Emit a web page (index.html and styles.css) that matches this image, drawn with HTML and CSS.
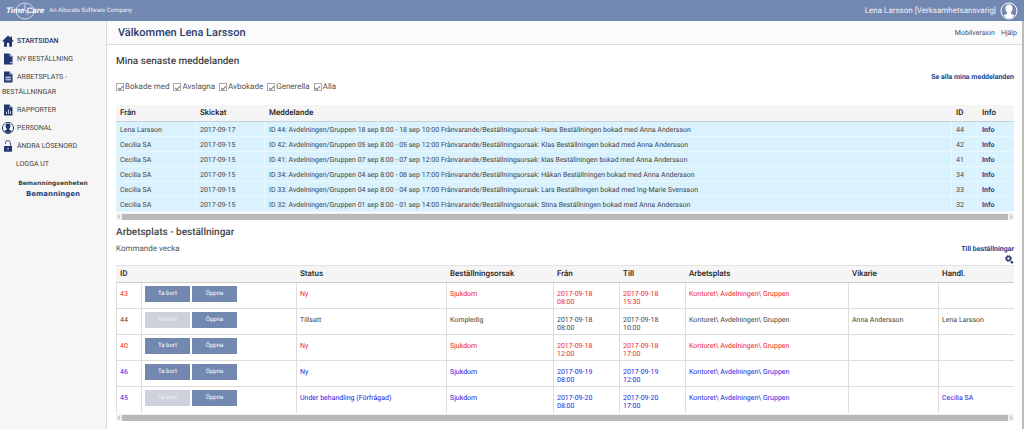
FILE: index.html
```html
<!DOCTYPE html>
<html lang="sv">
<head>
<meta charset="utf-8">
<title>Time Care</title>
<link rel="stylesheet" href="styles.css">
</head>
<body>
<header class="topbar">
  <div class="logo">
    <svg class="logo-ring" viewBox="0 0 28 18" aria-hidden="true"><ellipse cx="14" cy="9" rx="9" ry="8" fill="none" stroke="#d5dcec" stroke-width="1"/><path d="M14 2v6l3 5" fill="none" stroke="#d5dcec"/></svg>
    <span>Time</span><span>Care</span>
  </div>
  <span class="tagline">An Allocate Software Company</span>
  <span class="user">Lena Larsson [Verksamhetsansvarig]</span>
  <svg class="avatar" viewBox="0 0 18 18" aria-hidden="true"><circle cx="9" cy="9" r="8" fill="#7388b0" stroke="#fff" stroke-width="1"/><path d="M9 2.500c-2.600 0-3.800 1.700-3.600 4 .1 1.800.8 3 1.700 3.900v1.400c-1 .5-2.400.9-3.600 1.700A7 7 0 0 0 9 16.300a7 7 0 0 0 5.500-2.800c-1.200-.8-2.600-1.200-3.600-1.700v-1.400c.9-.9 1.600-2.100 1.700-3.900.2-2.300-1-4-3.600-4z" fill="#fff"/></svg>
</header>
<div class="shell">
  <nav class="sidebar">
    <a class="item active" href="#"><svg viewBox="0 0 12 12"><path d="M6 .5L.3 6l.8.9L2 6v5.700h3V8h2.200v3.700H10V6l.9.900.8-.9L10 4.200V1.500H8.300v1.200z"/></svg>STARTSIDAN</a>
    <a class="item" href="#"><svg viewBox="0 0 12 12"><path d="M2 .5h5.500L10.500 3.500v8H2z"/><path d="M7.500.5v3h3" fill="#aab4cc"/><circle cx="9" cy="9.500" r=".8" fill="#fff"/></svg>NY BESTÄLLNING</a>
    <a class="item" href="#"><svg viewBox="0 0 12 12"><path d="M2 .5h5.500L10.500 3.500v8H2z"/><path d="M7.500.5v3h3" fill="#aab4cc"/><path d="M3.500 5.500h5.500v4H3.500z" fill="#aab9dd"/><path d="M3.500 7.500h5.500" stroke="#24386f" stroke-width=".6"/></svg>ARBETSPLATS -<br>BESTÄLLNINGAR</a>
    <a class="item" href="#"><svg viewBox="0 0 12 12"><path d="M2 .5h5.500L10.500 3.500v8H2z"/><path d="M7.500.5v3h3" fill="#aab4cc"/><path d="M4.500 10V7.500M6.500 10V5.500M8.500 10V7" stroke="#c5cde0"/></svg>RAPPORTER</a>
    <a class="item" href="#"><svg viewBox="0 0 12 12"><circle cx="6" cy="6" r="5.500" fill="#fff" stroke="#24386f"/><path d="M6 1.500c-1.800 0-2.600 1.200-2.500 2.700.1 1.200.6 2 1.200 2.600v.9L2.200 9A5 5 0 0 0 6 11a5 5 0 0 0 3.800-2L7.300 7.700v-.9c.6-.6 1.100-1.400 1.200-2.600.1-1.500-.7-2.700-2.500-2.700z"/></svg>PERSONAL</a>
    <a class="item" href="#"><svg viewBox="0 0 12 12"><rect x="2" y="6" width="8" height="5.700"/><path d="M3.500 3.800V3a2.400 2.400 0 0 1 4.900 0v3" fill="none" stroke="#4b5b87"/><circle cx="6" cy="8.700" r=".9" fill="#aab4cc"/></svg>ÄNDRA LÖSENORD</a>
    <a class="item logout" href="#">LOGGA UT</a>
    <div class="unit"><span>Bemanningsenheten</span><strong>Bemanningen</strong></div>
  </nav>
  <main class="main">
    <div class="titlebar">
      <h1>Välkommen Lena Larsson</h1>
      <div class="tools"><a href="#">Mobilversion</a><a href="#">Hjälp</a></div>
    </div>
    <div class="content">
      <section>
        <h2>Mina senaste meddelanden</h2>
        <div class="filterrow">
          <div class="filters">
            <label><input type="checkbox" checked>Bokade med</label>
            <label><input type="checkbox" checked>Avslagna</label>
            <label><input type="checkbox" checked>Avbokade</label>
            <label><input type="checkbox" checked>Generella</label>
            <label><input type="checkbox" checked>Alla</label>
          </div>
          <a class="link" href="#">Se alla mina meddelanden</a>
        </div>
        <table class="messages">
          <colgroup><col class="w-from"><col class="w-sent"><col><col class="w-no"><col class="w-info"></colgroup>
          <thead><tr><th>Från</th><th>Skickat</th><th>Meddelande</th><th>ID</th><th>Info</th></tr></thead>
          <tbody>
            <tr><td>Lena Larsson</td><td>2017-09-17</td><td>ID 44: Avdelningen/Gruppen 18 sep 8:00 - 18 sep 10:00 Frånvarande/Beställningsorsak: Hans Beställningen bokad med Anna Andersson</td><td>44</td><td><a class="link" href="#">Info</a></td></tr>
            <tr><td>Cecilia SA</td><td>2017-09-15</td><td>ID 42: Avdelningen/Gruppen 05 sep 8:00 - 05 sep 12:00 Frånvarande/Beställningsorsak: Klas Beställningen bokad med Anna Andersson</td><td>42</td><td><a class="link" href="#">Info</a></td></tr>
            <tr><td>Cecilia SA</td><td>2017-09-15</td><td>ID 41: Avdelningen/Gruppen 07 sep 8:00 - 07 sep 12:00 Frånvarande/Beställningsorsak: klas Beställningen bokad med Anna Andersson</td><td>41</td><td><a class="link" href="#">Info</a></td></tr>
            <tr><td>Cecilia SA</td><td>2017-09-15</td><td>ID 34: Avdelningen/Gruppen 04 sep 8:00 - 08 sep 17:00 Frånvarande/Beställningsorsak: Håkan Beställningen bokad med Anna Andersson</td><td>34</td><td><a class="link" href="#">Info</a></td></tr>
            <tr><td>Cecilia SA</td><td>2017-09-15</td><td>ID 33: Avdelningen/Gruppen 04 sep 8:00 - 04 sep 17:00 Frånvarande/Beställningsorsak: Lars Beställningen bokad med Ing-Marie Svensson</td><td>33</td><td><a class="link" href="#">Info</a></td></tr>
            <tr><td>Cecilia SA</td><td>2017-09-15</td><td>ID 32: Avdelningen/Gruppen 01 sep 8:00 - 01 sep 14:00 Frånvarande/Beställningsorsak: Stina Beställningen bokad med Anna Andersson</td><td>32</td><td><a class="link" href="#">Info</a></td></tr>
          </tbody>
        </table>
        <div class="scroll"><span>‹</span><i></i><span>›</span></div>
      </section>
      <section class="orders-section">
        <h2>Arbetsplats - beställningar</h2>
        <div class="weekrow"><span>Kommande vecka</span><a class="link" href="#">Till beställningar</a></div>
        <div class="gearrow"><button type="button" aria-label="Inställningar"><svg viewBox="0 0 9 9"><circle cx="3.500" cy="3.500" r="2" fill="none" stroke="#2c3f72" stroke-width="1.600"/><circle cx="3.500" cy="3.500" r="3" fill="none" stroke="#2c3f72" stroke-dasharray="1.200 1.150"/><circle cx="7" cy="7.200" r="1.300" fill="#2c3f72"/></svg></button></div>
        <table class="orders">
          <colgroup><col class="c-id"><col class="c-act"><col class="c-status"><col class="c-reason"><col class="c-date"><col class="c-date"><col class="c-place"><col class="c-sub"><col class="c-handler"></colgroup>
          <thead><tr><th>ID</th><th></th><th>Status</th><th>Beställningsorsak</th><th>Från</th><th>Till</th><th>Arbetsplats</th><th>Vikarie</th><th>Handl.</th></tr></thead>
          <tbody>
            <tr class="red"><td>43</td><td><div class="actions"><button type="button">Ta bort</button><button type="button">Öppna</button></div></td><td>Ny</td><td>Sjukdom</td><td>2017-09-18<br>08:00</td><td>2017-09-18<br>15:30</td><td>Kontoret\ Avdelningen\ Gruppen</td><td></td><td></td></tr>
            <tr><td>44</td><td><div class="actions"><button type="button" disabled>Ta bort</button><button type="button">Öppna</button></div></td><td>Tillsatt</td><td>Kompledig</td><td>2017-09-18<br>08:00</td><td>2017-09-18<br>10:00</td><td>Kontoret\ Avdelningen\ Gruppen</td><td>Anna Andersson</td><td>Lena Larsson</td></tr>
            <tr class="red"><td>40</td><td><div class="actions"><button type="button">Ta bort</button><button type="button">Öppna</button></div></td><td>Ny</td><td>Sjukdom</td><td>2017-09-18<br>12:00</td><td>2017-09-18<br>17:00</td><td>Kontoret\ Avdelningen\ Gruppen</td><td></td><td></td></tr>
            <tr class="blue"><td>46</td><td><div class="actions"><button type="button">Ta bort</button><button type="button">Öppna</button></div></td><td>Ny</td><td>Sjukdom</td><td>2017-09-19<br>08:00</td><td>2017-09-19<br>12:00</td><td>Kontoret\ Avdelningen\ Gruppen</td><td></td><td></td></tr>
            <tr class="blue"><td>45</td><td><div class="actions"><button type="button" disabled>Ta bort</button><button type="button">Öppna</button></div></td><td>Under behandling (Förfrågad)</td><td>Sjukdom</td><td>2017-09-20<br>08:00</td><td>2017-09-20<br>17:00</td><td>Kontoret\ Avdelningen\ Gruppen</td><td></td><td>Cecilia SA</td></tr>
          </tbody>
        </table>
        <div class="scroll"><span>‹</span><i></i><span>›</span></div>
      </section>
    </div>
  </main>
</div>
</body>
</html>
```
FILE: styles.css
```css
* { box-sizing: border-box; }
body { margin: 0; min-height: 100vh; display: flex; flex-direction: column; font-family: Roboto, sans-serif; font-size: 8px; line-height: 10px; color: #555; background: #fff; text-rendering: geometricPrecision; }
a { color: inherit; text-decoration: none; }
h1, h2 { margin: 0; font-weight: 500; }
button { font: inherit; border: 0; padding: 0; cursor: pointer; text-rendering: inherit; }

.topbar { height: 21px; padding: 0 6px; display: flex; align-items: center; background: #7388b0; color: #fff; }
.logo { position: relative; display: flex; gap: 2px; font-family: "Liberation Sans", sans-serif; font-size: 8px; font-weight: bold; font-style: italic; }
.logo-ring { position: absolute; left: 5px; top: -4px; width: 28px; height: 18px; }
.logo span { position: relative; }
.tagline { margin-left: 5px; font-size: 6px; color: #f0f2f8; }
.user { margin-left: auto; margin-right: 4px; color: #f0f2f8; }
.avatar { width: 18px; height: 18px; }

.shell { flex: 1; display: flex; border-right: 2px solid #bbb; }
.sidebar { width: 107px; flex: none; padding-top: 13px; background: #f6f6f6; border-right: 1px solid #d9d9d9; }
.item { display: block; padding: 0 2px; margin-bottom: 3px; font-size: 7px; line-height: 15px; color: #444; }
.item svg { width: 12px; height: 12px; margin: 1px 3px 1px 0; vertical-align: middle; fill: #24386f; }
.item.active { color: #24386f; font-weight: 500; }
.item.logout { padding-left: 16px; }
.unit { display: flex; flex-direction: column; align-items: center; margin-top: 7px; font-family: "DejaVu Sans", sans-serif; font-size: 6px; font-weight: bold; line-height: 10px; color: #444; }
.unit strong { font-size: 7px; color: #2d4585; }

.main { flex: 1; min-width: 0; }
.titlebar { height: 24px; padding: 0 5px 0 11px; display: flex; align-items: center; justify-content: space-between; border-bottom: 1px solid #ddd; background: #fbfbfc; }
h1 { font-size: 11px; line-height: 16px; color: #2b3c6b; }
.tools { display: flex; gap: 6px; font-size: 7px; color: #3f4a6b; }
.content { padding: 10px 8px 9px 9px; }
h2 { font-size: 10px; line-height: 14px; color: #444; }
.filterrow { display: flex; justify-content: space-between; padding: 3px 0 13px; }
.filters { display: flex; gap: 4px; padding-top: 10px; }
.filters label { display: flex; align-items: center; gap: 1px; }
.filters input { appearance: none; width: 8px; height: 8px; margin: 0; border: 1px solid #aaa; background: #fff; display: grid; place-items: center; }
.filters input:checked::after { content: ""; width: 4px; height: 2px; border: solid #777; border-width: 0 0 1px 1px; transform: rotate(-45deg); }
.link { color: #24458f; font-size: 7px; font-weight: 700; }

table { width: 100%; table-layout: fixed; border-collapse: separate; border-spacing: 0; }
th, td { text-align: left; font-weight: 400; padding: 0 4px; }
th { background: #f5f5f5; color: #222; font-weight: 500; }
td { font-size: 7px; color: #444; }
.messages th { height: 17px; border-bottom: 1px solid #c5d0de; }
.messages td { height: 15px; padding-top: 1px; background: #d9f2fe; border-bottom: 1px solid #e8f8ff; border-right: 1px solid #e8f8ff; }
.messages td:last-child { border-right: 0; }
.w-from { width: 80px; }
.w-sent { width: 69px; }
.w-no { width: 26px; }
.w-info { width: 36px; }

.scroll { height: 7px; margin-top: 1px; display: flex; align-items: center; background: #f0f0f0; color: #888; line-height: 6px; }
.scroll i { flex: 1; height: 6px; background: #b9b9b9; }
.scroll span { width: 6px; text-align: center; }

.orders-section { margin-top: 6px; }
.weekrow { display: flex; justify-content: space-between; padding-top: 4px; }
.gearrow { height: 11px; display: flex; justify-content: flex-end; align-items: center; }
.gearrow button { width: 9px; height: 9px; background: none; display: flex; }
.orders th { height: 18px; border-top: 1px solid #e2e2e2; border-bottom: 1px solid #ccc; }
.orders td { height: 26px; vertical-align: top; padding: 7px 3px 0; line-height: 8px; border-left: 1px solid #ddd; border-bottom: 1px solid #ddd; }
.orders tr:last-child td { border-bottom: 0; }
.orders td:nth-child(2) { padding-top: 3px; }
.actions { display: flex; gap: 2px; }
.actions button { width: 45px; height: 16px; background: #7388b0; color: #fff; font-size: 6px; }
.actions button:disabled { background: #cdd1dc; color: #f2f3f7; }
.red td { color: #f01c28; }
.blue td { color: #2218e0; }
.c-id { width: 25px; }
.c-act { width: 155px; }
.c-status { width: 150px; }
.c-reason { width: 107px; }
.c-date { width: 66px; }
.c-sub { width: 90px; }
.c-handler { width: 76px; }
```
